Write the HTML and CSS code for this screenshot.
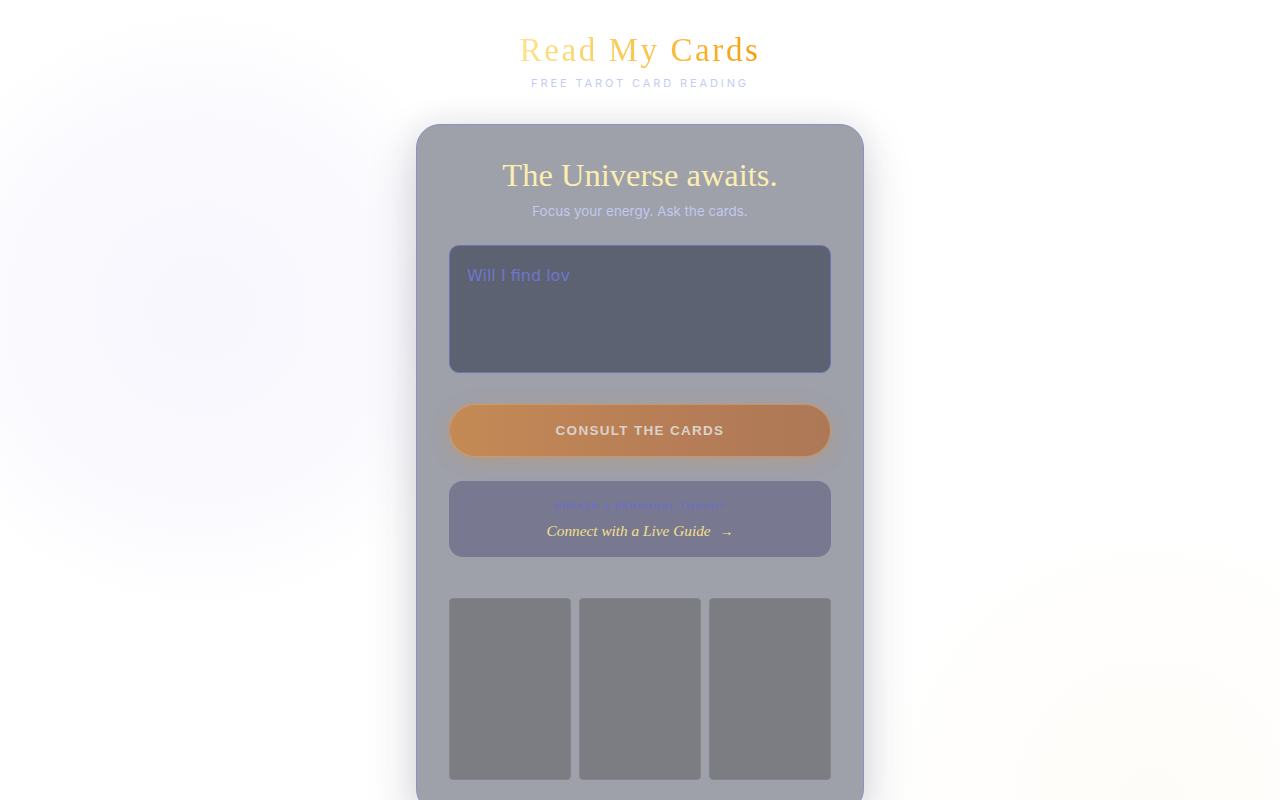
FILE: index.html
```html
<!DOCTYPE html>
<html lang="en">
<head>
<meta charset="utf-8">
<title>Read My Cards</title>
<link rel="stylesheet" href="styles.css">
</head>
<body>
<div class="page">
  <header class="brand">
    <h1 class="brand-title">Read My Cards</h1>
    <p class="brand-sub">FREE TAROT CARD READING</p>
  </header>
  <main class="panel">
    <h2 class="panel-title">The Universe awaits.</h2>
    <p class="panel-sub">Focus your energy. Ask the cards.</p>
    <div class="question">Will I find lov</div>
    <button class="consult">CONSULT THE CARDS</button>
    <div class="guide">
      <div class="guide-label">PREFER A PERSONAL TOUCH?</div>
      <div class="guide-link">Connect with a Live Guide <span class="arrow">→</span></div>
    </div>
    <div class="spread">
      <div class="slot"></div>
      <div class="slot"></div>
      <div class="slot"></div>
    </div>
  </main>
</div>
</body>
</html>
```
FILE: styles.css
```css
html, body {
  margin: 0;
  padding: 0;
  height: 100%;
  overflow: hidden;
}
body {
  background:
    radial-gradient(ellipse 300px 300px at 200px 310px, rgba(120,110,230,0.06), rgba(120,110,230,0.03) 70%, rgba(120,110,230,0) 100%),
    radial-gradient(circle 300px at 1150px 800px, rgba(240,200,120,0.05), rgba(240,200,120,0) 100%),
    #ffffff;
  font-family: "Inter", "Noto Sans", sans-serif;
}
.page {
  display: flex;
  flex-direction: column;
  align-items: center;
  padding-top: 30px;
}
.brand {
  text-align: center;
}
.brand-title {
  margin: 0;
  font-family: "Liberation Serif", serif;
  font-weight: 400;
  font-size: 33px;
  line-height: 40px;
  letter-spacing: 2.6px;
  background: linear-gradient(90deg, #fde38e 0%, #fbc24a 55%, #f59e0b 100%);
  -webkit-background-clip: text;
  background-clip: text;
  color: transparent;
}
.brand-sub {
  margin: 5px 0 0;
  font-size: 11px;
  line-height: 16px;
  letter-spacing: 2.9px;
  color: #c5cbf3;
}
.panel {
  margin-top: 33px;
  width: 382px;
  padding: 32px;
  background: #9ea0aa;
  border: 1px solid #8f90c4;
  border-radius: 24px;
  box-shadow: 0 18px 50px rgba(40,40,60,0.18), 0 0 30px rgba(40,40,60,0.08);
  display: flex;
  flex-direction: column;
}
.panel-title {
  margin: 0;
  text-align: center;
  font-family: "Liberation Serif", serif;
  font-weight: 400;
  font-size: 32.5px;
  line-height: 36px;
  color: #fbeeb0;
}
.panel-sub {
  margin: 8px 0 0;
  text-align: center;
  font-size: 13.4px;
  line-height: 20px;
  color: #c3c8f0;
}
.question {
  margin-top: 24px;
  height: 128px;
  box-sizing: border-box;
  padding: 18px 17px;
  background: #5c6271;
  border: 1px solid #6e73b6;
  border-radius: 10px;
  font-family: "DejaVu Sans", sans-serif;
  font-size: 16px;
  line-height: 24px;
  color: #6e76cc;
}
.consult {
  margin-top: 31px;
  height: 53px;
  border: 1px solid rgba(230,170,110,0.5);
  border-radius: 27px;
  background: linear-gradient(90deg, #c48a55 0%, #b67d57 60%, #ad7856 100%);
  box-shadow: 0 4px 18px rgba(210,150,80,0.35);
  font-family: "Liberation Sans", "Inter", sans-serif;
  font-weight: 700;
  font-size: 13.5px;
  letter-spacing: 1.3px;
  color: #dad2c9;
  cursor: pointer;
}
.guide {
  margin-top: 24px;
  height: 76px;
  box-sizing: border-box;
  padding-top: 19px;
  background: #787890;
  border-radius: 14px;
  text-align: center;
}
.guide-label {
  font-family: "Liberation Sans", sans-serif;
  font-weight: 700;
  font-size: 9px;
  line-height: 12px;
  letter-spacing: 1.4px;
  color: #6b70c6;
}
.guide-link {
  margin-top: 9px;
  font-family: "Liberation Serif", serif;
  font-style: italic;
  font-size: 15.3px;
  line-height: 20px;
  color: #f4e08a;
}
.arrow {
  font-style: normal;
  font-size: 14px;
  margin-left: 5px;
}
.spread {
  margin-top: 41px;
  display: grid;
  grid-template-columns: repeat(3, 1fr);
  gap: 8px;
}
.slot {
  height: 182px;
  background: #7c7d83;
  border: 1px solid #84858d;
  border-radius: 4px;
  box-sizing: border-box;
}
```
